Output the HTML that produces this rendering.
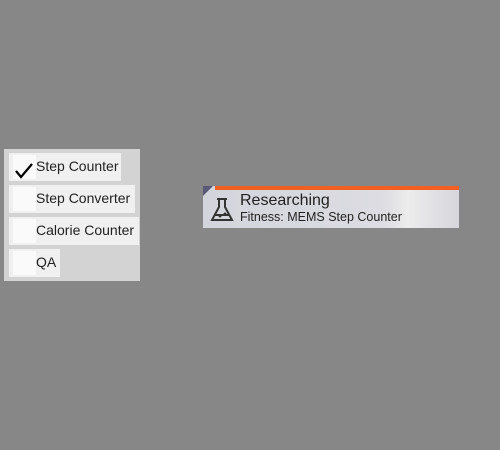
<!DOCTYPE html>
<html><head><style>
body{margin:0;width:500px;height:450px;background:#878787;position:relative;overflow:hidden;font-family:"Liberation Sans",sans-serif}
.panel{position:absolute;left:4px;top:149px;width:136px;height:132px;background:#d3d3d3}
.row{position:absolute;left:5px;height:28px;background:#f0f0f0;font-size:14px;color:#222;line-height:27px;padding-left:27px}
.row i{position:absolute;left:4px;top:2px;width:23px;height:24px;background:#fafafa}
.res{position:absolute;left:203px;top:186px;width:256px;height:42px;background:linear-gradient(90deg,#d4d4dc,#dcdce2 70%,#ececec 80%,#d6d6dc)}
.bar{position:absolute;left:12px;top:0;right:0;height:4px;background:#f06020}
.tri{position:absolute;left:0;top:0;width:0;height:0;border-top:10px solid #5a5a78;border-right:10px solid transparent}
</style></head><body>
<div class="panel">
<div class="row" style="top:4px;width:85px"><i></i><span>Step Counter</span>
<svg style="position:absolute;left:6px;top:10px" width="18" height="16" viewBox="0 0 18 16"><path d="M1 8 L6 14 L17 1" stroke="#000" stroke-width="2.2" fill="none"/></svg></div>
<div class="row" style="top:36px;width:99px"><i></i><span>Step Converter</span></div>
<div class="row" style="top:68px;width:103px"><i></i><span>Calorie Counter</span></div>
<div class="row" style="top:100px;width:24px"><i></i><span>QA</span></div>
</div>
<div class="res"><div class="bar"></div><div class="tri"></div>
<svg style="position:absolute;left:7px;top:11px" width="24" height="26" viewBox="0 0 24 26"><path d="M7 2h10M9 2v8L2 23h20L15 10V2M5 18h14" stroke="#333" stroke-width="2" fill="none"/><circle cx="10" cy="19" r="1.5" fill="#333"/><circle cx="15" cy="17" r="1.5" fill="#333"/></svg>
<div style="position:absolute;left:37px;top:6px;font-size:16px;color:#222">Researching</div>
<div style="position:absolute;left:37px;top:24px;font-size:12.5px;color:#222">Fitness: MEMS Step Counter</div>
</div>
</body></html>
